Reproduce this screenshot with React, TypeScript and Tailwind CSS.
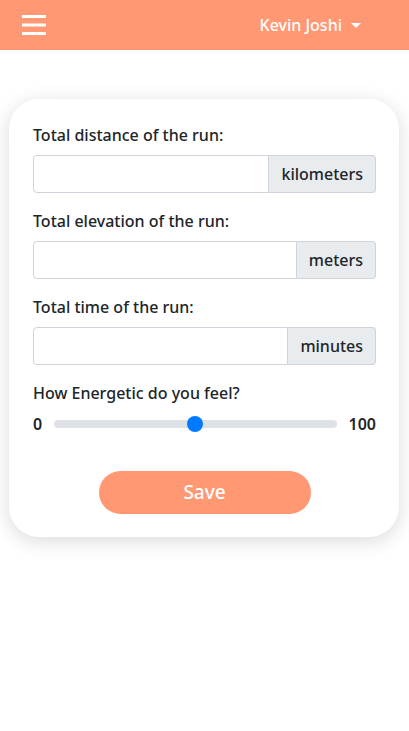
import React, { useState } from 'react';

function InputGroup({ label, unit }: { label: string; unit: string }) {
  return (
    <div className="mb-4">
      <label className="block text-[16px] leading-6 font-medium text-[#212529] mb-2">{label}</label>
      <div className="flex h-[38px]">
        <input
          type="text"
          className="flex-1 min-w-0 border border-[#ced4da] rounded-l-[4px] px-3 outline-none bg-white"
        />
        <span className="flex items-center px-3 bg-[#e9ecef] border border-l-0 border-[#ced4da] rounded-r-[4px] text-[16px] font-medium text-[#212529]">
          {unit}
        </span>
      </div>
    </div>
  );
}

export default function App() {
  const [energy, setEnergy] = useState(50);

  return (
    <div className="min-h-[731px] bg-white font-['Noto_Sans','Lato',sans-serif]">
      <nav className="h-[50px] bg-[#ff9873] flex items-center justify-between pl-[22px] pr-[48px]">
        <svg width="24" height="20" viewBox="0 0 24 20" className="text-white">
          <rect x="0" y="0" width="24" height="3" fill="currentColor" />
          <rect x="0" y="8.5" width="24" height="3" fill="currentColor" />
          <rect x="0" y="17" width="24" height="3" fill="currentColor" />
        </svg>
        <button className="flex items-center gap-[9px] text-white text-[16px] font-medium">
          Kevin Joshi
          <span className="w-0 h-0 border-l-[5px] border-r-[5px] border-t-[5px] border-l-transparent border-r-transparent border-t-white" />
        </button>
      </nav>

      <div className="pl-[9px] pr-[10px] pt-[49px]">
        <div className="bg-white rounded-[30px] shadow-[0_4px_20px_rgba(0,0,0,0.15)] pl-[24px] pr-[23px] pt-[24px] pb-[23px]">
          <InputGroup label="Total distance of the run:" unit="kilometers" />
          <InputGroup label="Total elevation of the run:" unit="meters" />
          <InputGroup label="Total time of the run:" unit="minutes" />

          <label className="block text-[16px] leading-6 font-medium text-[#212529] mb-[7px]">How Energetic do you feel?</label>
          <div className="flex items-center h-6 gap-3 text-[16px] font-semibold text-[#212529]">
            <span>0</span>
            <div className="relative flex-1 h-4 flex items-center">
              <div className="w-full h-2 rounded-full bg-[#dee2e6]" />
              <div
                className="absolute w-4 h-4 rounded-full bg-[#007bff] -translate-x-1/2"
                style={{ left: `${energy}%` }}
              />
              <input
                type="range"
                min={0}
                max={100}
                value={energy}
                onChange={(e) => setEnergy(Number(e.target.value))}
                className="absolute inset-0 w-full opacity-0 cursor-pointer"
              />
            </div>
            <span>100</span>
          </div>

          <div className="flex justify-center mt-[35px]">
            <button className="w-[212px] h-[43px] rounded-full bg-[#ff9873] text-white text-[19px] font-medium">
              Save
            </button>
          </div>
        </div>
      </div>
    </div>
  );
}
